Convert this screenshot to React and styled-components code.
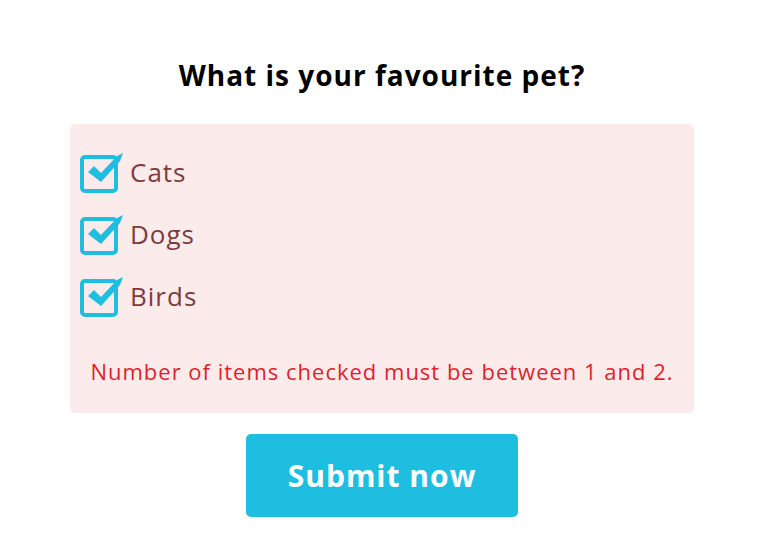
import React from "react";
import styled, { createGlobalStyle } from "styled-components";

const Global = createGlobalStyle`
  html, body { margin: 0; padding: 0; background: #fff; }
  body { font-family: "Open Sans", "Liberation Sans", sans-serif; letter-spacing: 1px; }
`;

const Page = styled.div`
  width: 762px;
  height: 552px;
  display: flex;
  flex-direction: column;
  align-items: center;
  box-sizing: border-box;
  padding-top: 56px;
  padding-left: 2px;
`;

const Title = styled.h2`
  margin: 0;
  font-size: 28px;
  font-weight: 700;
  line-height: 38px;
  color: #000;
`;

const Panel = styled.div`
  margin-top: 30px;
  width: 624px;
  height: 289px;
  box-sizing: border-box;
  background: #fcebeb;
  border-radius: 5px;
  padding: 29px 10px 0 10px;
  display: flex;
  flex-direction: column;
`;

const Row = styled.label`
  display: flex;
  align-items: center;
  height: 62px;
  gap: 12px;
  color: #7d3b3e;
  font-size: 26px;
  margin-top: ${(p) => (p.first ? "-12px" : "0")};
`;

const Box = styled.span`
  position: relative;
  width: 38px;
  height: 38px;
  flex: none;
  display: inline-block;
`;

const Error = styled.div`
  margin-top: 29px;
  text-align: center;
  color: #e01f2e;
  font-size: 22px;
  line-height: 30px;
`;

const Button = styled.button`
  margin-top: 21px;
  width: 272px;
  height: 83px;
  border: none;
  border-radius: 5px;
  background: #1ebee0;
  color: #fff;
  font-family: "Open Sans", "Liberation Sans", sans-serif;
  font-weight: 700;
  font-size: 30px;
  letter-spacing: 1px;
  cursor: pointer;
`;

function Check() {
  return (
    <Box>
      <svg width="46" height="42" viewBox="0 0 46 42" style={{ position: "absolute", left: 0, top: -2 }}>
        <rect x="2" y="6" width="34" height="34" rx="3" fill="none" stroke="#1ebee0" strokeWidth="4" />
        <path d="M8 21 L14 15 L21 22 L37 5 L43 2 L40 10 L21 31 Z" fill="#1ebee0" />
      </svg>
    </Box>
  );
}

export default function App() {
  return (
    <>
      <Global />
      <Page>
        <Title>What is your favourite pet?</Title>
        <Panel>
          {["Cats", "Dogs", "Birds"].map((n, i) => (
            <Row key={n} first={i === 0}>
              <Check />
              <span>{n}</span>
            </Row>
          ))}
          <Error>Number of items checked must be between 1 and 2.</Error>
        </Panel>
        <Button>Submit now</Button>
      </Page>
    </>
  );
}
